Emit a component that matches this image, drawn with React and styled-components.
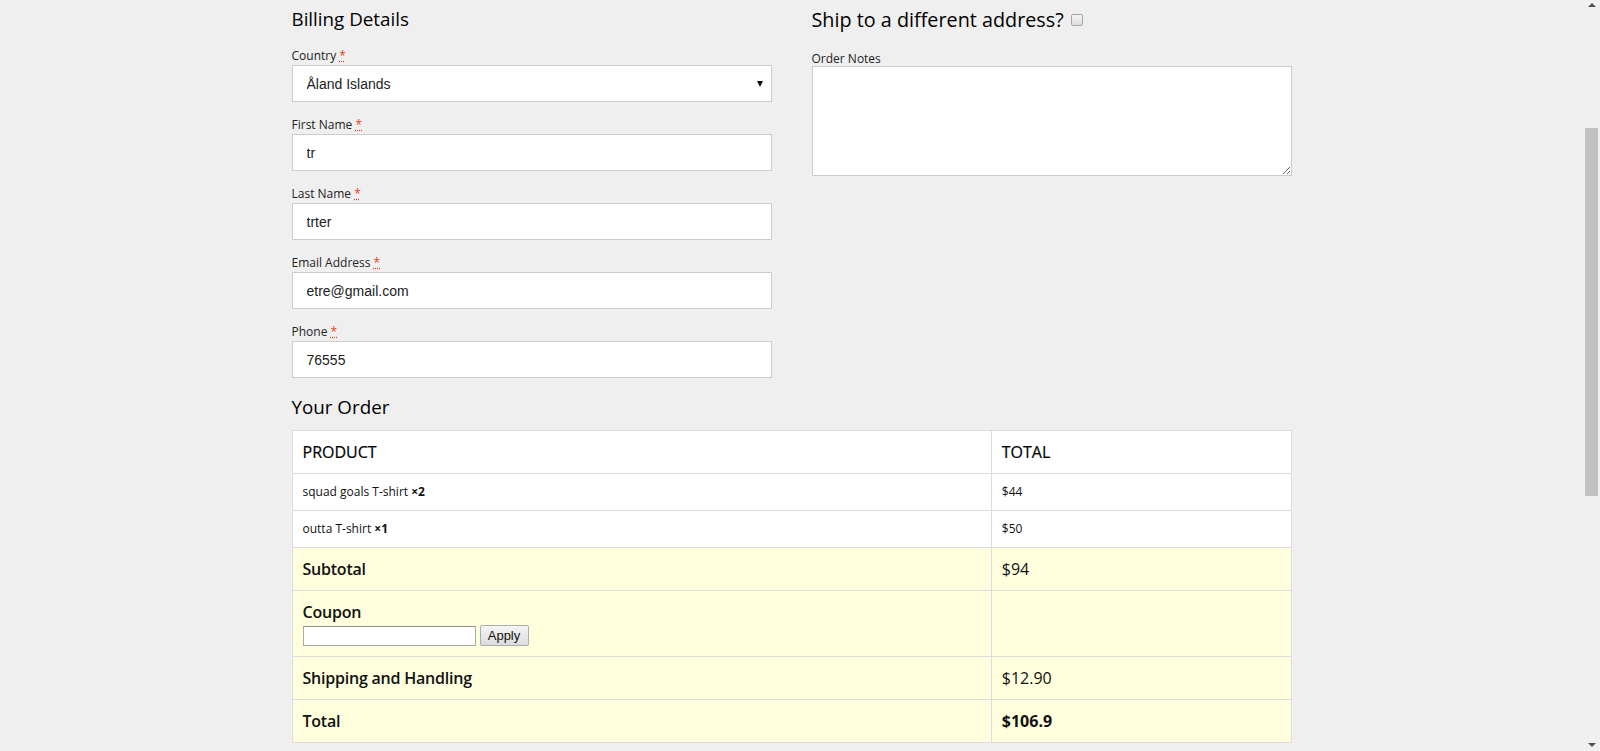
import React from "react";
import styled, { createGlobalStyle } from "styled-components";

const Global = createGlobalStyle`
  html, body { margin: 0; padding: 0; background: #efefef; overflow: hidden; }
  body { font-family: "Open Sans", "Noto Sans", sans-serif; color: #111; }
  #root { height: 751px; }
  * { box-sizing: border-box; }
`;

const Shell = styled.div`
  display: flex;
  height: 751px;
  overflow: hidden;
`;

const Page = styled.main`
  flex: 1;
  min-width: 0;
`;

const Container = styled.div`
  width: 1000px;
  margin: 0 auto;
  padding-top: 6px;
`;

const Columns = styled.div`
  display: grid;
  grid-template-columns: 1fr 1fr;
  column-gap: 40px;
`;

const Column = styled.section`
  display: flex;
  flex-direction: column;
`;

const Heading = styled.h3`
  margin: 0 0 ${(p) => p.$mb || 14}px;
  font-size: ${(p) => p.$size || 18.8}px;
  font-weight: 500;
  line-height: 27px;
  color: #000;
  display: flex;
  align-items: center;
`;

const Check = styled.input`
  appearance: none;
  -webkit-appearance: none;
  width: 12px;
  height: 12px;
  margin: 1px 0 0 7px;
  border: 1px solid #a6a6a6;
  border-radius: 2px;
  background: linear-gradient(#f4f4f4, #dedede);
`;

const Field = styled.div`
  display: flex;
  flex-direction: column;
  margin-bottom: 14px;
`;

const Label = styled.label`
  font-size: 12px;
  line-height: 18px;
  color: #222;
`;

const Req = styled.abbr`
  color: #e2401c;
  text-decoration: underline dotted;
  border: none;
  cursor: help;
`;

const TextInput = styled.input`
  height: 37px;
  width: 100%;
  border: 1px solid #cccccc;
  background: #fff;
  padding: 0 14px;
  font-family: "Liberation Sans", Arial, sans-serif;
  font-size: 14px;
  color: #222;
  outline: none;
`;

const SelectWrap = styled.div`
  position: relative;
  &::after {
    content: "";
    position: absolute;
    right: 9px;
    top: 16px;
    border-left: 3.5px solid transparent;
    border-right: 3.5px solid transparent;
    border-top: 6px solid #111;
  }
`;

const Select = styled.select`
  appearance: none;
  -webkit-appearance: none;
  height: 37px;
  width: 100%;
  border: 1px solid #cccccc;
  border-radius: 0;
  background: #fff;
  padding: 0 14px;
  font-family: "Liberation Sans", Arial, sans-serif;
  font-size: 14px;
  color: #222;
  outline: none;
`;

const Notes = styled.textarea`
  height: 110px;
  width: 100%;
  border: 1px solid #cccccc;
  background: #fff;
  outline: none;
  margin: -2px 0 0;
  display: block;
`;

const OrderTitle = styled(Heading)`
  margin: 2px 0 9px;
`;

const Table = styled.table`
  width: 100%;
  border-collapse: collapse;
  border: 1px solid #dddddd;
  background: #fff;
  table-layout: fixed;
`;

const Row = styled.tr`
  background: ${(p) => (p.$foot ? "#ffffdd" : "#ffffff")};
`;

const HeadCell = styled.th`
  text-align: left;
  font-weight: 400;
  font-size: 16px;
  line-height: 22px;
  padding: 10px 10px;
  border: 1px solid #dddddd;
  color: #000;
  -webkit-text-stroke: 0.2px #000;
  width: ${(p) => p.$w || "auto"};
`;

const Cell = styled.td`
  font-size: ${(p) => (p.$big ? 16 : 12)}px;
  line-height: ${(p) => (p.$big ? 22 : 16)}px;
  font-weight: ${(p) => p.$weight || 400};
  letter-spacing: ${(p) => (p.$weight === 600 ? "-0.22px" : "0")};
  padding: 10px 10px;
  border: 1px solid #dddddd;
  vertical-align: top;
  color: #111;
`;

const Qty = styled.strong`
  font-weight: 700;
`;

const CouponLine = styled.div`
  display: flex;
  align-items: center;
  gap: 4px;
  margin-top: 2px;
  height: 21px;
  letter-spacing: 0;
`;

const CouponInput = styled.input`
  width: 173px;
  height: 20px;
  border: 1px solid #a9a9a9;
  border-top-color: #8f8f8f;
  background: #fff;
  padding: 0 3px;
  outline: none;
`;

const ApplyButton = styled.button`
  height: 21px;
  width: 49px;
  padding: 0;
  border: 1px solid #adadad;
  border-radius: 2px;
  background: linear-gradient(#f5f5f5, #dcdcdc);
  font-family: "Liberation Sans", Arial, sans-serif;
  font-size: 13px;
  color: #111;
`;

const ScrollTrack = styled.div`
  width: 17px;
  height: 751px;
  background: #f0f0f0;
  display: flex;
  flex-direction: column;
  align-items: center;
  flex-shrink: 0;
`;

const Arrow = styled.div`
  height: 17px;
  width: 17px;
  display: flex;
  align-items: ${(p) => (p.$down ? "flex-end" : "flex-start")};
  justify-content: center;
  padding: ${(p) => (p.$down ? "0 0 4px" : "3px 0 0")};
`;

const Thumb = styled.div`
  width: 13px;
  height: 368px;
  margin-top: 111px;
  background: #c1c1c1;
`;

const Spacer = styled.div`
  flex: 1;
`;

const Triangle = ({ down }) => (
  <svg width="8" height="4" viewBox="0 0 8 4">
    {down ? (
      <polygon points="0,0 8,0 4,4" fill="#505050" />
    ) : (
      <polygon points="0,4 8,4 4,0" fill="#505050" />
    )}
  </svg>
);

const fields = [
  { label: "First Name", value: "tr" },
  { label: "Last Name", value: "trter" },
  { label: "Email Address", value: "etre@gmail.com" },
  { label: "Phone", value: "76555" },
];

export default function App() {
  return (
    <>
      <Global />
      <Shell>
        <Page>
          <Container>
            <Columns>
              <Column>
                <Heading>Billing Details</Heading>
                <Field>
                  <Label>
                    Country <Req title="required">*</Req>
                  </Label>
                  <SelectWrap>
                    <Select defaultValue="ax">
                      <option value="ax">Åland Islands</option>
                    </Select>
                  </SelectWrap>
                </Field>
                {fields.map((f) => (
                  <Field key={f.label}>
                    <Label>
                      {f.label} <Req title="required">*</Req>
                    </Label>
                    <TextInput defaultValue={f.value} />
                  </Field>
                ))}
              </Column>
              <Column>
                <Heading $size={19.8} $mb={17}>
                  Ship to a different address? <Check type="checkbox" />
                </Heading>
                <Label>Order Notes</Label>
                <Notes />
              </Column>
            </Columns>
            <OrderTitle>Your Order</OrderTitle>
            <Table>
              <thead>
                <Row>
                  <HeadCell $w="70%">PRODUCT</HeadCell>
                  <HeadCell>TOTAL</HeadCell>
                </Row>
              </thead>
              <tbody>
                <Row>
                  <Cell>
                    squad goals T-shirt <Qty>×2</Qty>
                  </Cell>
                  <Cell>$44</Cell>
                </Row>
                <Row>
                  <Cell>
                    outta T-shirt <Qty>×1</Qty>
                  </Cell>
                  <Cell>$50</Cell>
                </Row>
              </tbody>
              <tfoot>
                <Row $foot>
                  <Cell $big $weight={600}>Subtotal</Cell>
                  <Cell $big>$94</Cell>
                </Row>
                <Row $foot>
                  <Cell $big $weight={600}>
                    Coupon
                    <CouponLine>
                      <CouponInput />
                      <ApplyButton>Apply</ApplyButton>
                    </CouponLine>
                  </Cell>
                  <Cell $big></Cell>
                </Row>
                <Row $foot>
                  <Cell $big $weight={600}>Shipping and Handling</Cell>
                  <Cell $big>$12.90</Cell>
                </Row>
                <Row $foot>
                  <Cell $big $weight={600}>Total</Cell>
                  <Cell $big $weight={700}>$106.9</Cell>
                </Row>
              </tfoot>
            </Table>
          </Container>
        </Page>
        <ScrollTrack>
          <Arrow>
            <Triangle />
          </Arrow>
          <Thumb />
          <Spacer />
          <Arrow $down>
            <Triangle down />
          </Arrow>
        </ScrollTrack>
      </Shell>
    </>
  );
}
